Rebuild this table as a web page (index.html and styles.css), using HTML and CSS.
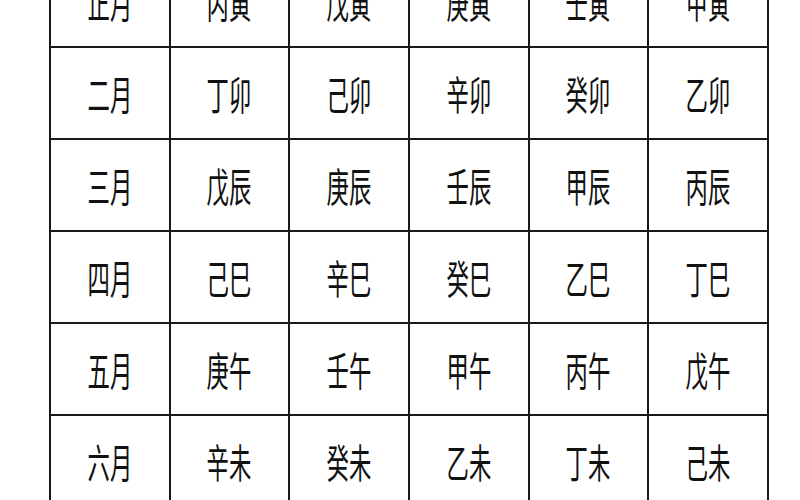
FILE: index.html
```html
<!DOCTYPE html>
<html lang="zh">
<head>
<meta charset="utf-8">
<title>月柱表</title>
<link rel="stylesheet" href="styles.css">
</head>
<body>
<div class="grid">
  <div class="cell"><span>正月</span></div><div class="cell"><span>丙寅</span></div><div class="cell"><span>戊寅</span></div><div class="cell"><span>庚寅</span></div><div class="cell"><span>壬寅</span></div><div class="cell"><span>甲寅</span></div>
  <div class="cell"><span>二月</span></div><div class="cell"><span>丁卯</span></div><div class="cell"><span>己卯</span></div><div class="cell"><span>辛卯</span></div><div class="cell"><span>癸卯</span></div><div class="cell"><span>乙卯</span></div>
  <div class="cell"><span>三月</span></div><div class="cell"><span>戊辰</span></div><div class="cell"><span>庚辰</span></div><div class="cell"><span>壬辰</span></div><div class="cell"><span>甲辰</span></div><div class="cell"><span>丙辰</span></div>
  <div class="cell"><span>四月</span></div><div class="cell"><span>己巳</span></div><div class="cell"><span>辛巳</span></div><div class="cell"><span>癸巳</span></div><div class="cell"><span>乙巳</span></div><div class="cell"><span>丁巳</span></div>
  <div class="cell"><span>五月</span></div><div class="cell"><span>庚午</span></div><div class="cell"><span>壬午</span></div><div class="cell"><span>甲午</span></div><div class="cell"><span>丙午</span></div><div class="cell"><span>戊午</span></div>
  <div class="cell"><span>六月</span></div><div class="cell"><span>辛未</span></div><div class="cell"><span>癸未</span></div><div class="cell"><span>乙未</span></div><div class="cell"><span>丁未</span></div><div class="cell"><span>己未</span></div>
</div>
</body>
</html>
```

FILE: styles.css
```css
html, body {
  margin: 0;
  padding: 0;
  background: #ffffff;
  overflow: hidden;
}
body {
  width: 800px;
  height: 500px;
}
.grid {
  display: grid;
  grid-template-columns: repeat(6, 1fr);
  grid-auto-rows: 90px;
  gap: 2px;
  padding: 2px;
  width: 720px;
  box-sizing: border-box;
  margin: -46px 0 0 49px;
  background: #1a1a1a;
}
.cell {
  background: #ffffff;
  display: flex;
  align-items: center;
  justify-content: center;
}
.cell span {
  display: inline-block;
  font-family: "Noto Sans CJK SC", "Noto Sans", sans-serif;
  font-size: 40px;
  line-height: 1;
  color: #111111;
  transform: scaleX(0.56);
  white-space: nowrap;
}
```
